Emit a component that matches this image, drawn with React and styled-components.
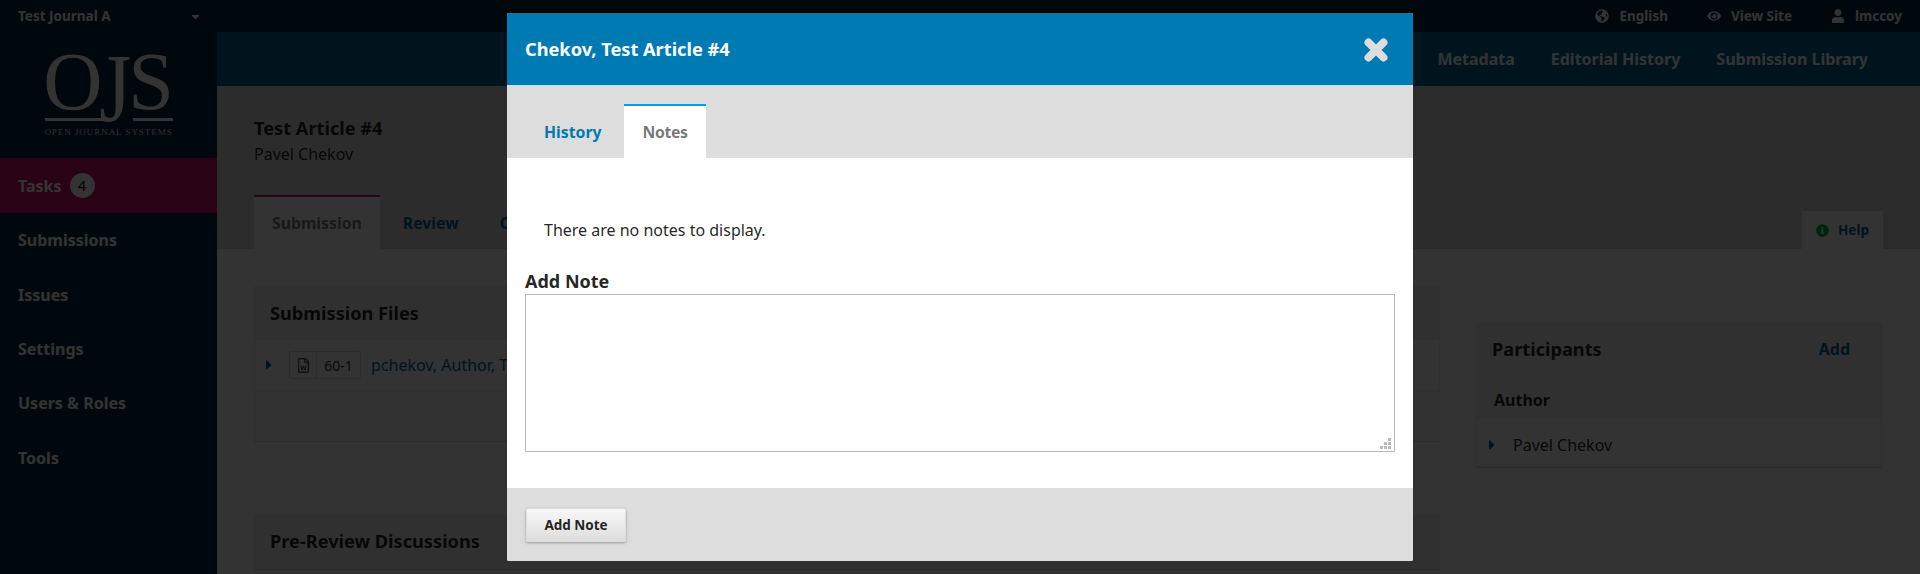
import React from "react";
import styled, { createGlobalStyle } from "styled-components";
import { FaCaretDown, FaCaretRight, FaEye, FaGlobeAmericas, FaInfoCircle, FaRegFileWord, FaUser } from "react-icons/fa";

const GlobalStyle = createGlobalStyle`
  html, body {
    margin: 0;
    height: 100%;
    overflow: hidden;
    background: #fff;
    font-family: "Noto Sans", "Open Sans", sans-serif;
    font-size: 16px;
    color: rgba(0, 0, 0, 0.87);
  }
  * { box-sizing: border-box; }
`;

const Page = styled.div`
  width: 1920px;
  height: 574px;
  position: relative;
  overflow: hidden;
  display: flex;
  flex-direction: column;
`;

const TopBar = styled.div`
  height: 32px;
  flex: none;
  background: #002c40;
  color: #fff;
  display: flex;
  align-items: center;
  justify-content: space-between;
  padding: 0 18px;
  font-size: 13.5px;
  font-weight: 700;
`;

const JournalSwitch = styled.div`
  width: 184px;
  display: flex;
  align-items: center;
  justify-content: space-between;
`;

const TopLinks = styled.div`
  display: flex;
  align-items: center;
  gap: 39px;
`;

const TopLink = styled.span`
  display: flex;
  align-items: center;
  gap: 10px;
  svg { font-size: 14px; }
`;

const Columns = styled.div`
  flex: 1;
  display: flex;
  min-height: 0;
`;

const Sidebar = styled.div`
  width: 217px;
  flex: none;
  background: #002c40;
  color: #fff;
`;

const Logo = styled.div`
  height: 126px;
  padding-top: 12px;
  display: flex;
  flex-direction: column;
  align-items: center;
  font-family: "Liberation Serif", serif;
`;

const LogoMark = styled.div`
  height: 70px;
  display: flex;
  font-size: 82px;
  line-height: 76px;
`;

const LogoLetter = styled.span`
  display: block;
  margin-right: ${(p) => p.$gap || 0}px;
  ${(p) => p.$tall && "transform: scaleY(1.18); transform-origin: top;"}
`;

const LogoRule = styled.div`
  width: 128px;
  display: flex;
  justify-content: space-between;
  margin-top: 4px;
`;

const RuleSegment = styled.span`
  width: ${(p) => p.$w}px;
  height: 3px;
  background: #fff;
`;

const LogoCaption = styled.div`
  font-size: 9px;
  line-height: 12px;
  letter-spacing: 0.95px;
  margin-top: 5px;
  opacity: 0.85;
`;

const NavItem = styled.div`
  height: ${(p) => (p.$active ? "55px" : "54.4px")};
  padding-left: 18px;
  display: flex;
  align-items: center;
  gap: 8px;
  font-weight: 700;
  font-size: 16px;
  background: ${(p) => (p.$active ? "#d00a6c" : "transparent")};
`;

const Count = styled.span`
  width: 25px;
  height: 25px;
  border-radius: 50%;
  background: #fff;
  color: #000;
  display: flex;
  align-items: center;
  justify-content: center;
  font-weight: 400;
  font-size: 14px;
`;

const Main = styled.div`
  flex: 1;
  min-width: 0;
`;

const ContextBar = styled.div`
  height: 54px;
  background: #006798;
  color: #fff;
  display: flex;
  align-items: center;
  justify-content: flex-end;
  gap: 36px;
  padding-right: 52px;
  font-size: 16px;
  font-weight: 700;
`;

const Head = styled.div`
  height: 163px;
  background: #ddd;
  padding: 29px 37px 0;
  display: flex;
  flex-direction: column;
`;

const ArticleTitle = styled.div`
  font-size: 18.2px;
  font-weight: 700;
  line-height: 26px;
`;

const ArticleAuthor = styled.div`
  font-size: 16px;
  line-height: 26px;
`;

const PageTabs = styled.div`
  margin-top: auto;
  display: flex;
  justify-content: space-between;
  height: 54px;
`;

const TabGroup = styled.div`
  display: flex;
  gap: 5px;
`;

const PageTab = styled.div`
  padding: 0 18px;
  line-height: 52px;
  font-weight: 700;
  font-size: 15.8px;
  background: ${(p) => (p.$active ? "#fff" : "transparent")};
  border-top: 2px solid ${(p) => (p.$active ? "#d00a6c" : "transparent")};
  color: ${(p) => (p.$active ? "rgba(0, 0, 0, 0.54)" : "#006798")};
`;

const HelpTab = styled.div`
  align-self: flex-end;
  height: 38px;
  width: 81px;
  display: flex;
  align-items: center;
  justify-content: center;
  gap: 9px;
  background: #fff;
  color: #006798;
  font-size: 13.5px;
  font-weight: 700;
  svg { color: #00b24e; font-size: 13px; }
`;

const Panel = styled.div`
  display: flex;
  gap: 36px;
  padding: 37px 37px 0;
`;

const Left = styled.div`
  width: 1186px;
  display: flex;
  flex-direction: column;
  gap: 73px;
`;

const Right = styled.div`
  width: 406px;
  padding-top: 37px;
`;

const Card = styled.div`
  background: #fff;
  box-shadow: 0 1px 1px rgba(0, 0, 0, 0.15);
  border: 1px solid #f0f0f0;
  border-top: 0;
`;

const CardHead = styled.div`
  height: ${(p) => p.$h || 54}px;
  padding: 0 ${(p) => (p.$right ? 31 : 15)}px 0 15px;
  background: #eee;
  display: flex;
  align-items: center;
  justify-content: space-between;
  font-size: 18.2px;
  font-weight: 700;
`;

const AddLink = styled.span`
  color: #006798;
  font-size: 16px;
  font-weight: 700;
`;

const GroupHead = styled.div`
  height: 43px;
  padding: 7px 17px 0;
  background: #eee;
  display: flex;
  align-items: center;
  font-size: 16px;
  font-weight: 700;
`;

const FileRow = styled.div`
  height: 50px;
  display: flex;
  align-items: center;
  padding-left: 6px;
  color: #006798;
  font-size: 16px;
`;

const Badge = styled.div`
  margin-left: 12px;
  width: 72px;
  height: 28px;
  border: 1px solid #ddd;
  border-radius: 2px;
  display: flex;
  color: rgba(0, 0, 0, 0.87);
  font-size: 14px;
`;

const BadgeIcon = styled.span`
  width: 27px;
  border-right: 1px solid #ddd;
  display: flex;
  align-items: center;
  justify-content: center;
  color: #555;
  font-size: 15px;
`;

const BadgeId = styled.span`
  flex: 1;
  display: flex;
  align-items: center;
  justify-content: center;
`;

const FileName = styled.span`
  margin-left: 10px;
  white-space: nowrap;
`;

const CardFoot = styled.div`
  height: 50px;
  background: #f4f4f4;
`;

const PersonRow = styled.div`
  height: 48px;
  display: flex;
  align-items: center;
  gap: 13px;
  padding: 5px 0 0 7px;
  font-size: 16px;
  svg { color: #006798; }
`;

const Overlay = styled.div`
  position: absolute;
  inset: 0;
  background: rgba(0, 0, 0, 0.8);
`;

const Modal = styled.div`
  position: absolute;
  left: 507px;
  top: 13px;
  width: 906px;
  height: 548px;
  background: #fff;
  border-radius: 2px;
  overflow: hidden;
  display: flex;
  flex-direction: column;
`;

const ModalHead = styled.div`
  height: 72px;
  flex: none;
  background: #007ab2;
  color: #fff;
  display: flex;
  align-items: center;
  justify-content: space-between;
  padding: 0 25px 0 18px;
  font-size: 18.2px;
  font-weight: 700;
`;

const CloseIcon = styled.svg`
  width: 24px;
  height: 24px;
  margin-top: 2px;
  stroke: #ddd;
  stroke-width: 8;
  stroke-linecap: round;
  fill: none;
`;

const ModalTabs = styled.div`
  height: 73px;
  flex: none;
  background: #ddd;
  padding: 19px 0 0 18px;
  display: flex;
  gap: 3px;
`;

const ModalTab = styled.div`
  padding: 0 ${(p) => (p.$active ? "18px" : "19px")} 0 19px;
  line-height: 52px;
  font-size: 15.8px;
  font-weight: 700;
  letter-spacing: ${(p) => (p.$active ? "-0.4px" : "0")};
  background: ${(p) => (p.$active ? "#fff" : "transparent")};
  border-top: 2px solid ${(p) => (p.$active ? "#00a0e3" : "transparent")};
  color: ${(p) => (p.$active ? "rgba(0, 0, 0, 0.54)" : "#007ab2")};
`;

const ModalBody = styled.div`
  flex: 1;
  padding: 61px 18px 0;
`;

const Empty = styled.div`
  padding-left: 19px;
  line-height: 22px;
  font-size: 16px;
`;

const NoteLabel = styled.label`
  display: block;
  margin-top: 28px;
  font-size: 18px;
  font-weight: 700;
  line-height: 24px;
`;

const NoteField = styled.div`
  position: relative;
  width: 870px;
  height: 158px;
  margin-top: 1px;
`;

const NoteInput = styled.textarea`
  display: block;
  width: 100%;
  height: 100%;
  margin: 0;
  border: 1px solid #bbb;
  border-radius: 0;
  outline: 0;
  resize: none;
`;

const ResizeGrip = styled.svg`
  position: absolute;
  right: 4px;
  bottom: 3px;
  width: 11px;
  height: 11px;
  fill: #bbb;
`;

const ModalFoot = styled.div`
  height: 73px;
  flex: none;
  background: #ddd;
  padding: 20px 19px;
`;

const Button = styled.button`
  width: 100px;
  height: 34px;
  padding: 0;
  border: 1px solid #ddd;
  border-radius: 2px;
  background: linear-gradient(#f8f8f8, #ddd);
  box-shadow: 0 1px 3px rgba(0, 0, 0, 0.3);
  font-family: inherit;
  font-size: 13.5px;
  font-weight: 700;
  color: rgba(0, 0, 0, 0.87);
`;

const navItems = ["Submissions", "Issues", "Settings", "Users & Roles", "Tools"];

export default function App() {
  return (
    <Page>
      <GlobalStyle />
      <TopBar>
        <JournalSwitch>
          Test Journal A
          <FaCaretDown size={13} />
        </JournalSwitch>
        <TopLinks>
          <TopLink><FaGlobeAmericas />English</TopLink>
          <TopLink><FaEye />View Site</TopLink>
          <TopLink><FaUser />lmccoy</TopLink>
        </TopLinks>
      </TopBar>
      <Columns>
        <Sidebar>
          <Logo>
            <LogoMark>
              <LogoLetter $gap={-3}>O</LogoLetter>
              <LogoLetter $gap={-3} $tall>J</LogoLetter>
              <LogoLetter>S</LogoLetter>
            </LogoMark>
            <LogoRule>
              <RuleSegment $w={59} />
              <RuleSegment $w={40} />
            </LogoRule>
            <LogoCaption>OPEN JOURNAL SYSTEMS</LogoCaption>
          </Logo>
          <NavItem $active>Tasks <Count>4</Count></NavItem>
          {navItems.map((item) => (
            <NavItem key={item}>{item}</NavItem>
          ))}
        </Sidebar>
        <Main>
          <ContextBar>
            <span>Metadata</span>
            <span>Editorial History</span>
            <span>Submission Library</span>
          </ContextBar>
          <Head>
            <ArticleTitle>Test Article #4</ArticleTitle>
            <ArticleAuthor>Pavel Chekov</ArticleAuthor>
            <PageTabs>
              <TabGroup>
                <PageTab $active>Submission</PageTab>
                <PageTab>Review</PageTab>
                <PageTab>Copyediting</PageTab>
              </TabGroup>
              <HelpTab><FaInfoCircle />Help</HelpTab>
            </PageTabs>
          </Head>
          <Panel>
            <Left>
              <Card>
                <CardHead>Submission Files</CardHead>
                <FileRow>
                  <FaCaretRight size={16} />
                  <Badge>
                    <BadgeIcon><FaRegFileWord /></BadgeIcon>
                    <BadgeId>60-1</BadgeId>
                  </Badge>
                  <FileName>pchekov, Author, Test Article.docx</FileName>
                </FileRow>
                <CardFoot />
              </Card>
              <Card>
                <CardHead>Pre-Review Discussions</CardHead>
              </Card>
            </Left>
            <Right>
              <Card>
                <CardHead $h={52} $right>
                  Participants
                  <AddLink>Add</AddLink>
                </CardHead>
                <GroupHead>Author</GroupHead>
                <PersonRow><FaCaretRight size={16} />Pavel Chekov</PersonRow>
              </Card>
            </Right>
          </Panel>
        </Main>
      </Columns>
      <Overlay />
      <Modal>
        <ModalHead>
          Chekov, Test Article #4
          <CloseIcon viewBox="0 0 24 24">
            <path d="M4.5 4.5 L19.5 19.5 M19.5 4.5 L4.5 19.5" />
          </CloseIcon>
        </ModalHead>
        <ModalTabs>
          <ModalTab>History</ModalTab>
          <ModalTab $active>Notes</ModalTab>
        </ModalTabs>
        <ModalBody>
          <Empty>There are no notes to display.</Empty>
          <NoteLabel>Add Note</NoteLabel>
          <NoteField>
            <NoteInput />
            <ResizeGrip viewBox="0 0 11 11">
              <rect x="8" y="0" width="3" height="3" />
              <rect x="4" y="4" width="3" height="3" />
              <rect x="8" y="4" width="3" height="3" />
              <rect x="0" y="8" width="3" height="3" />
              <rect x="4" y="8" width="3" height="3" />
              <rect x="8" y="8" width="3" height="3" />
            </ResizeGrip>
          </NoteField>
        </ModalBody>
        <ModalFoot>
          <Button>Add Note</Button>
        </ModalFoot>
      </Modal>
    </Page>
  );
}
